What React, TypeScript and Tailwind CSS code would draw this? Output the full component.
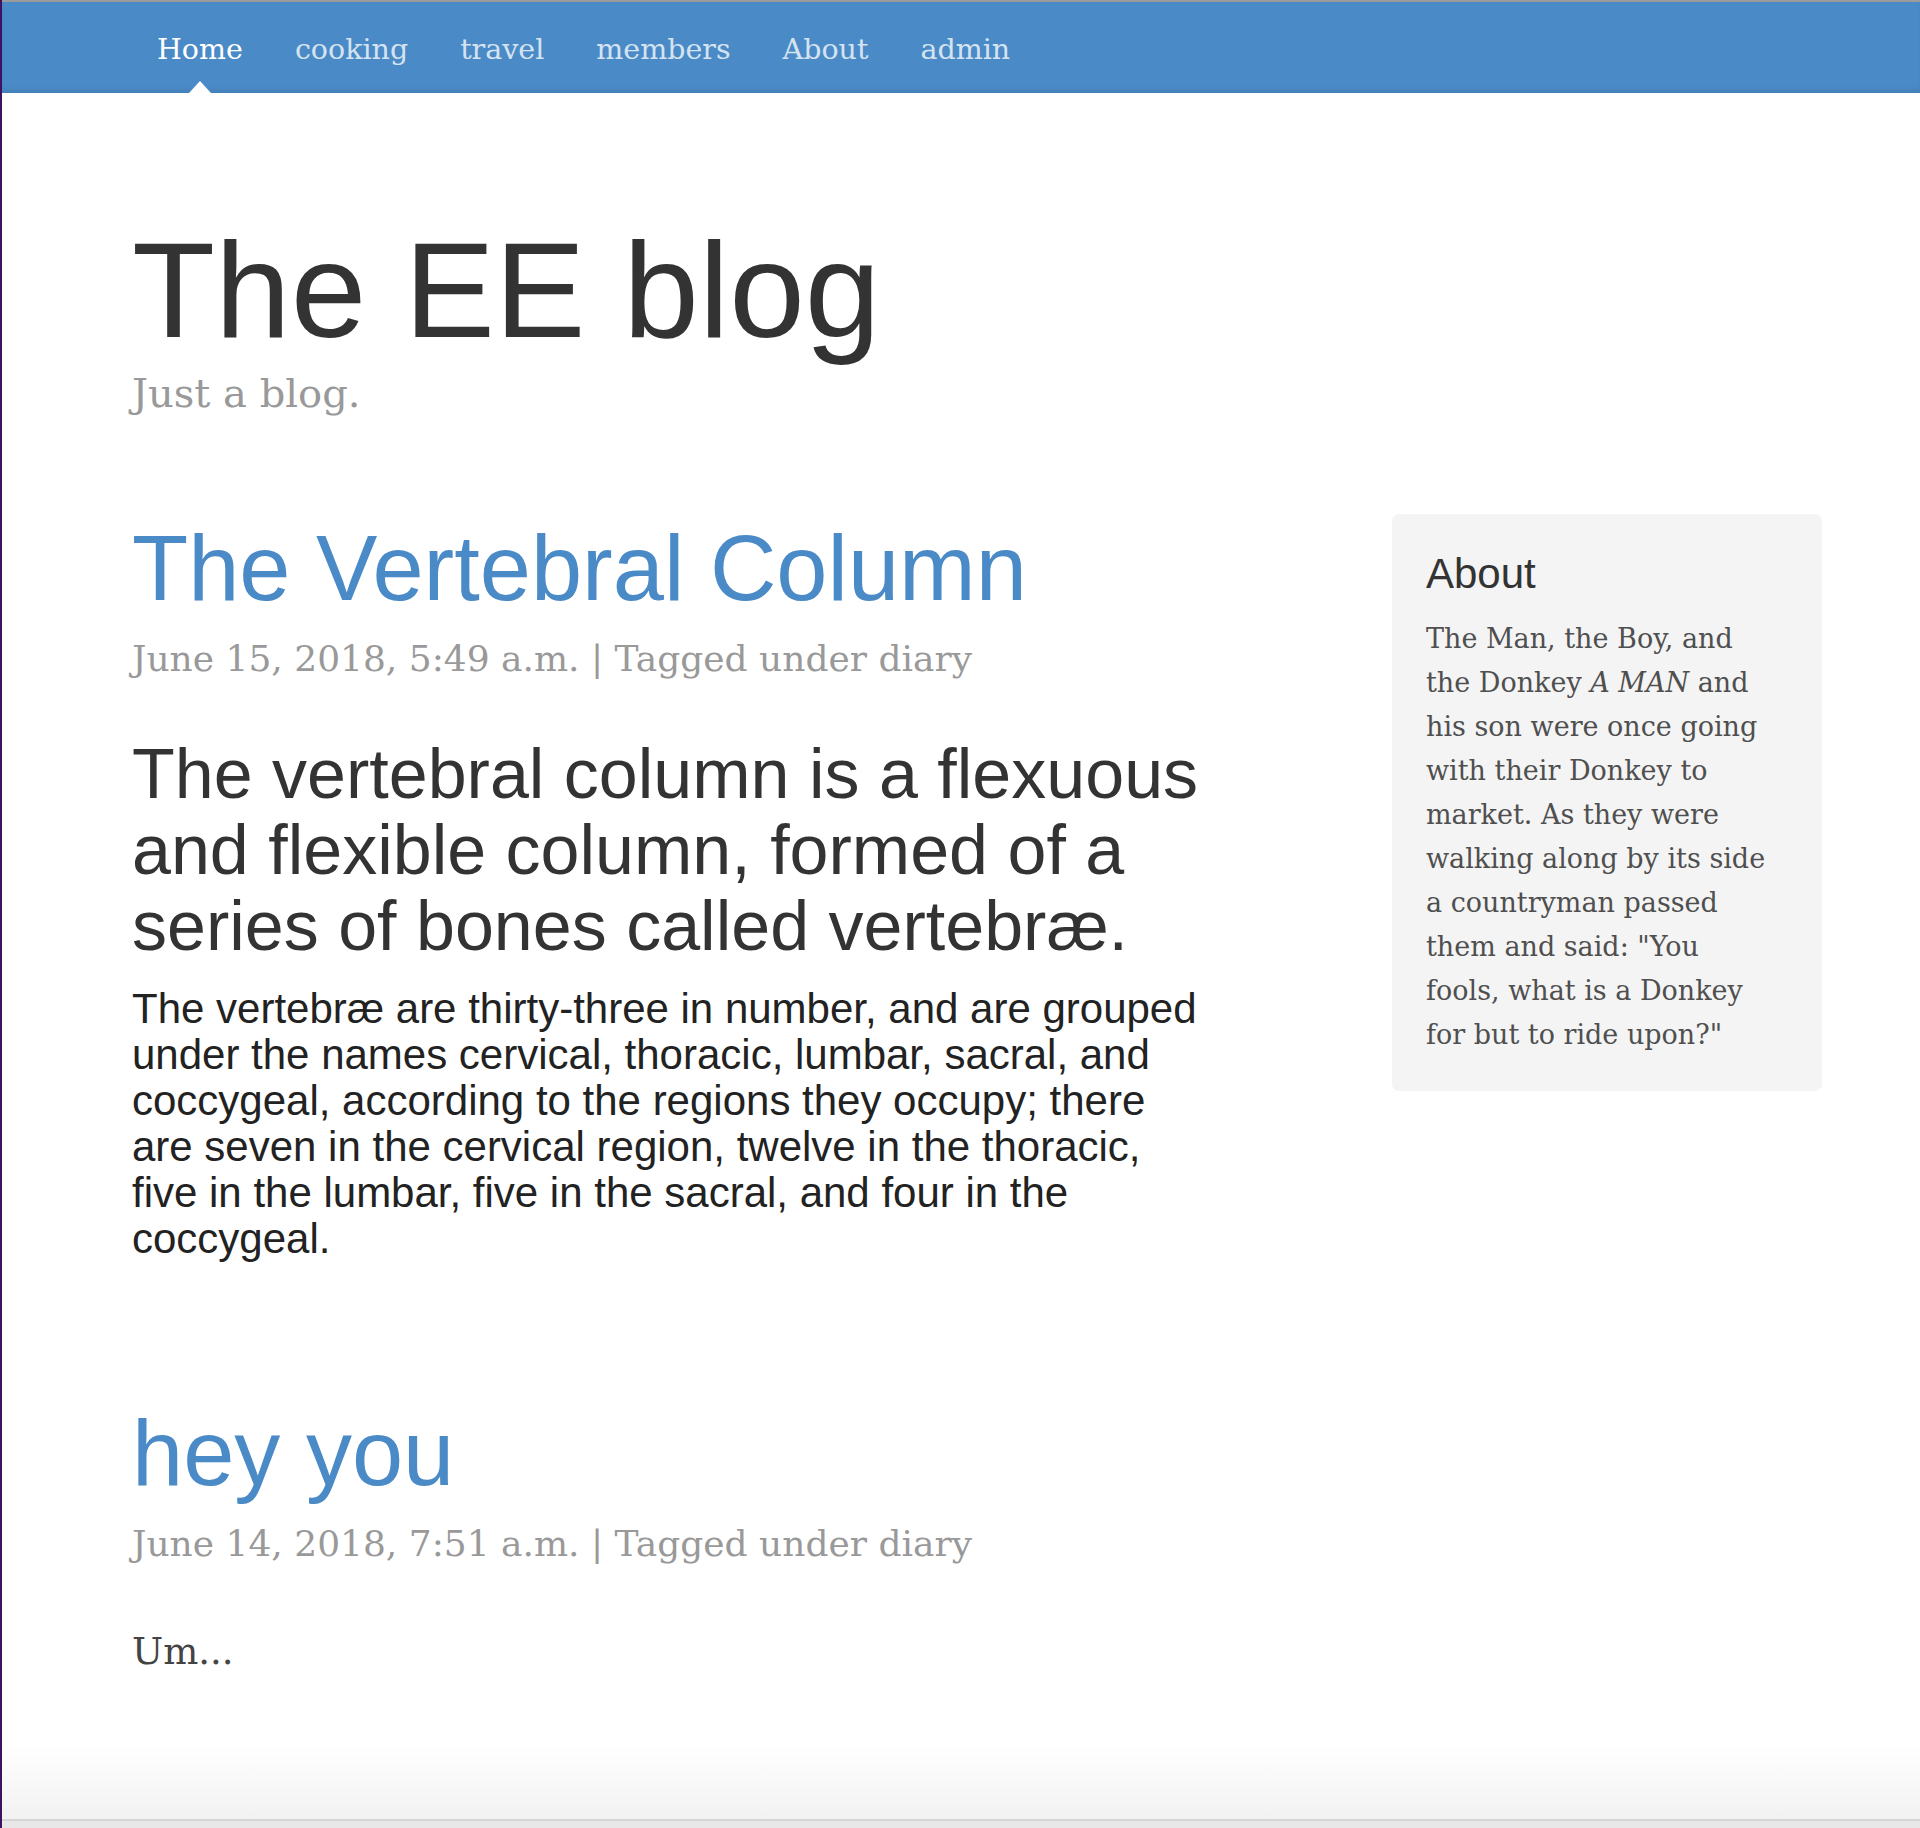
import React from "react";

const navItems = ["Home", "cooking", "travel", "members", "About", "admin"];

const serif = "font-['DejaVu_Serif',Georgia,serif]";
const sans = "font-['Liberation_Sans',Helvetica,Arial,sans-serif]";

const Nav = () => (
  <nav className="h-[93px] flex flex-col">
    <div className="h-[2px] bg-[#9b9b9b]" />
    <div className="flex-1 bg-[#4a8ac6] shadow-[inset_0_-5px_5px_-2px_rgba(0,0,0,0.08)] flex items-center pl-[155px] gap-[52px]">
      {navItems.map((item, i) => (
        <a
          key={item}
          href="#"
          className={`relative h-full flex items-center pt-[5px] text-[28.5px] leading-[1.2] ${serif} ${
            i === 0 ? "text-white" : "text-[#d5e3f1]"
          }`}
        >
          {item}
          {i === 0 && (
            <span className="absolute bottom-0 left-1/2 -translate-x-1/2 w-0 h-0 border-l-[11px] border-r-[11px] border-b-[12px] border-l-transparent border-r-transparent border-b-white" />
          )}
        </a>
      ))}
    </div>
  </nav>
);

const Meta = ({ date }: { date: string }) => (
  <p className={`mt-[24px] text-[36px] leading-[42px] text-[#999] ${serif}`}>
    {date} | Tagged under diary
  </p>
);

const Sidebar = () => (
  <aside className="w-[430px] shrink-0 bg-[#f4f4f4] rounded-[7px] pt-[35px] pb-[34px] pl-[34px] pr-[44px]">
    <h3 className={`text-[42px] leading-[50px] text-[#333] ${sans}`}>About</h3>
    <p className={`mt-[18px] w-[350px] text-[27px] leading-[44px] text-[#4f4f4f] ${serif}`}>
      The Man, the Boy, and the Donkey <em>A MAN</em> and his son were once going
      with their Donkey to market. As they were walking along by its side a
      countryman passed them and said: "You fools, what is a Donkey for but to
      ride upon?"
    </p>
  </aside>
);

export default function App() {
  return (
    <div className="h-[1828px] overflow-hidden bg-white border-l-2 border-[#3c1361] flex flex-col">
      <Nav />

      <header className="pl-[130px]">
        <h1 className={`mt-[129px] text-[136px] leading-none text-[#333] ${sans}`}>
          The EE blog
        </h1>
        <p className={`mt-[11px] text-[40px] leading-[48px] text-[#999] ${serif}`}>
          Just a blog.
        </p>
      </header>

      <main className="mt-[97px] pl-[130px] pr-[98px] flex justify-between items-start">
        <div className="w-[1080px]">
          <article>
            <h2 className={`mt-[8px] text-[92px] leading-none text-[#4a8ac6] ${sans}`}>
              The Vertebral Column
            </h2>
            <Meta date="June 15, 2018, 5:49 a.m." />
            <div className={`${sans}`}>
              <h2 className="mt-[56px] text-[70px] leading-[76px] text-[#333]">
                The vertebral column is a flexuous and flexible column, formed of a
                series of bones called vertebræ.
              </h2>
              <p className="mt-[22px] text-[42px] leading-[46px] text-[#222]">
                The vertebræ are thirty-three in number, and are grouped under the
                names cervical, thoracic, lumbar, sacral, and coccygeal, according to
                the regions they occupy; there are seven in the cervical region,
                twelve in the thoracic, five in the lumbar, five in the sacral, and
                four in the coccygeal.
              </p>
            </div>
          </article>

          <article className="mt-[145px]">
            <h2 className={`text-[92px] leading-none text-[#4a8ac6] ${sans}`}>hey you</h2>
            <Meta date="June 14, 2018, 7:51 a.m." />
            <p className={`mt-[65px] text-[37px] leading-[43px] text-[#444] ${serif}`}>
              Um...
            </p>
          </article>
        </div>

        <Sidebar />
      </main>

      <div className="mt-auto">
        <div className="h-[74px] bg-gradient-to-b from-white to-[#f2f2f2]" />
        <div className="h-[2px] bg-[#d6d6d6]" />
        <div className="h-[7px] bg-[#e8e8e8]" />
      </div>
    </div>
  );
}
